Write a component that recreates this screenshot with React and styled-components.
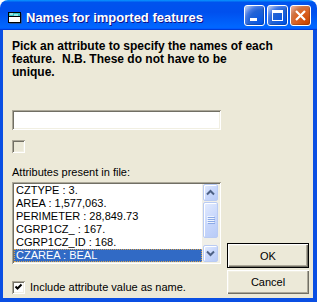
import React from "react";
import styled, { createGlobalStyle } from "styled-components";

const Global = createGlobalStyle`
  html, body { margin: 0; padding: 0; background: #ffffff; }
  * { box-sizing: border-box; }
`;

const Window = styled.div`
  width: 317px;
  height: 302px;
  display: flex;
  flex-direction: column;
  font-family: "Liberation Sans", Arial, sans-serif;
  color: #000;
`;

const TitleBar = styled.div`
  height: 30px;
  flex-shrink: 0;
  display: flex;
  align-items: center;
  padding: 5px 6px 0 7px;
  border-radius: 8px 8px 0 0;
  background: linear-gradient(180deg, #0997ff 0%, #0053ee 8%, #0050ee 40%, #0066ff 88%, #0066ff 93%, #005bff 95%, #003dd7 96%, #003dd7 100%);
`;

const TitleIcon = styled.svg`
  width: 16px;
  height: 16px;
  margin-right: 3px;
  margin-top: -2px;
  flex-shrink: 0;
`;

const TitleText = styled.span`
  font-family: "Liberation Sans", Arial, sans-serif;
  font-weight: bold;
  font-size: 13px;
  line-height: 16px;
  color: #fff;
  text-shadow: 1px 1px #0f1089;
  white-space: nowrap;
`;

const CaptionButtons = styled.div`
  margin-left: auto;
  align-self: flex-start;
  display: flex;
  gap: 2px;
`;

const CaptionButton = styled.div`
  width: 21px;
  height: 21px;
  border: 1px solid #fff;
  border-radius: 3px;
  display: flex;
  align-items: center;
  justify-content: center;
  background: ${(p) =>
    p.$close
      ? "radial-gradient(circle at 85% 90%, #cc4600 0%, #dc6527 55%, #cd7546 70%, #e9a48a 90%)"
      : "radial-gradient(circle at 90% 90%, #0054e9 0%, #2263d5 55%, #4479e4 70%, #a3bbec 90%)"};
  box-shadow: inset -1px -1px 1px rgba(0, 0, 0, 0.2);
`;

const Body = styled.div`
  flex: 1;
  display: flex;
  flex-direction: column;
  background: #ece9d8;
  border-style: solid;
  border-color: #0a4fe3;
  border-width: 0 4px 4px 3px;
  padding: 10px 4px 0 9px;
`;

const Instructions = styled.p`
  margin: 0;
  font-size: 12px;
  line-height: 13px;
  font-weight: bold;
  white-space: nowrap;
`;

const MainRow = styled.div`
  display: flex;
  align-items: flex-end;
  gap: 6px;
`;

const LeftColumn = styled.div`
  width: 209px;
  display: flex;
  flex-direction: column;
`;

const sunken = `
  box-shadow: inset 1px 1px #aca899, inset -1px -1px #ffffff, inset 2px 2px #716f64, inset -2px -2px #f1efe2;
`;

const TextBox = styled.div`
  margin-top: 31px;
  height: 20px;
  background: #fff;
  ${sunken}
`;

const CheckBox = styled.span`
  width: 13px;
  height: 13px;
  flex-shrink: 0;
  display: flex;
  align-items: center;
  justify-content: center;
  margin-top: ${(p) => p.$top || 0}px;
  background: ${(p) => (p.$disabled ? "#ece9d8" : "#ffffff")};
  ${sunken}
`;

const Label = styled.div`
  font-size: 11px;
  line-height: 13px;
  margin-top: ${(p) => p.$top || 0}px;
  white-space: nowrap;
`;

const ListBox = styled.div`
  margin-top: 3px;
  height: 82px;
  padding: 2px;
  display: flex;
  background: #fff;
  ${sunken}
`;

const Items = styled.div`
  flex: 1;
  overflow: hidden;
`;

const Item = styled.div`
  height: 13px;
  font-size: 11px;
  line-height: 13px;
  padding-left: 2px;
  white-space: nowrap;
  background: ${(p) => (p.$selected ? "#316ac5" : "transparent")};
  color: ${(p) => (p.$selected ? "#ffffff" : "#000000")};
  outline: ${(p) => (p.$selected ? "1px dotted #d9a34e" : "none")};
  outline-offset: -1px;
`;

const ScrollBar = styled.div`
  width: 17px;
  display: flex;
  flex-direction: column;
  background: #f0efe8;
  padding: 0 1px;
`;

const ScrollButton = styled.div`
  height: 17px;
  flex-shrink: 0;
  display: flex;
  align-items: center;
  justify-content: center;
  border: 1px solid #b9cbf3;
  border-radius: 2px;
  background: linear-gradient(135deg, #e4ecfe 0%, #c9d8fc 50%, #b8cbf7 100%);
  box-shadow: inset 1px 1px #ffffff;
`;

const Thumb = styled(ScrollButton)`
  height: 36px;
  margin-top: 1px;
`;

const Spacer = styled.div`
  flex: 1;
`;

const CheckRow = styled.div`
  margin-top: 16px;
  height: 14px;
  display: flex;
  align-items: center;
  gap: 5px;
`;

const ButtonColumn = styled.div`
  width: 82px;
  display: flex;
  flex-direction: column;
  gap: 2px;
`;

const PushButton = styled.div`
  height: ${(p) => (p.$default ? 25 : 24)}px;
  display: flex;
  align-items: center;
  justify-content: center;
  font-size: 11px;
  background: #ece9d8;
  border: ${(p) => (p.$default ? "1px solid #000" : "none")};
  box-shadow: inset 1px 1px #ffffff, inset -1px -1px #716f64, inset -2px -2px #aca899, inset 2px 2px #f1efe2;
`;

const Chevron = ({ up }) => (
  <svg width="9" height="7" viewBox="0 0 9 7">
    <path
      d={up ? "M1 5.5 L4.5 2 L8 5.5" : "M1 1.5 L4.5 5 L8 1.5"}
      fill="none"
      stroke="#4d6185"
      strokeWidth="2"
    />
  </svg>
);

const Grip = () => (
  <svg width="8" height="8" viewBox="0 0 8 8">
    {[0, 2, 4, 6].map((y) => (
      <g key={y}>
        <rect x="0" y={y} width="7" height="1" fill="#eef4fe" />
        <rect x="1" y={y + 1} width="7" height="1" fill="#8caae6" />
      </g>
    ))}
  </svg>
);

const items = [
  "CZTYPE : 3.",
  "AREA : 1,577,063.",
  "PERIMETER : 28,849.73",
  "CGRP1CZ_ : 167.",
  "CGRP1CZ_ID : 168.",
  "CZAREA : BEAL",
];

export default function App() {
  return (
    <>
      <Global />
      <Window>
        <TitleBar>
          <TitleIcon viewBox="0 0 16 16">
            <rect x="2.5" y="4.5" width="12" height="10" fill="#404040" />
            <rect x="1.5" y="3.5" width="12" height="10" fill="#ffffff" stroke="#000" />
            <rect x="2" y="4" width="11" height="3" fill="#39c6c6" />
            <path d="M3 5 L6 5 M7 6 L11 6" stroke="#ffffff" strokeWidth="1" />
            <path d="M2 7.5 L13 7.5" stroke="#000" strokeWidth="1" />
          </TitleIcon>
          <TitleText>Names for imported features</TitleText>
          <CaptionButtons>
            <CaptionButton>
              <svg width="19" height="19" viewBox="0 0 19 19">
                <rect x="5" y="12" width="7" height="3" fill="#fff" />
              </svg>
            </CaptionButton>
            <CaptionButton>
              <svg width="19" height="19" viewBox="0 0 19 19">
                <rect x="4.5" y="4.5" width="10" height="10" fill="none" stroke="#fff" />
                <rect x="4" y="4" width="11" height="3" fill="#fff" />
              </svg>
            </CaptionButton>
            <CaptionButton $close>
              <svg width="19" height="19" viewBox="0 0 19 19">
                <path d="M5 5 L14 14 M14 5 L5 14" stroke="#fff" strokeWidth="2.2" />
              </svg>
            </CaptionButton>
          </CaptionButtons>
        </TitleBar>
        <Body>
          <Instructions>
            Pick an attribute to specify the names of each
            <br />
            {"feature.\u00a0 N.B. These do not have to be"}
            <br />
            unique.
          </Instructions>
          <MainRow>
            <LeftColumn>
              <TextBox />
              <CheckBox $disabled $top={10} />
              <Label $top={13}>Attributes present in file:</Label>
              <ListBox>
                <Items>
                  {items.map((t, i) => (
                    <Item key={t} $selected={i === items.length - 1}>
                      {t}
                    </Item>
                  ))}
                </Items>
                <ScrollBar>
                  <ScrollButton>
                    <Chevron up />
                  </ScrollButton>
                  <Thumb>
                    <Grip />
                  </Thumb>
                  <Spacer />
                  <ScrollButton>
                    <Chevron />
                  </ScrollButton>
                </ScrollBar>
              </ListBox>
              <CheckRow>
                <CheckBox>
                  <svg width="9" height="9" viewBox="0 0 9 9">
                    <path d="M1.5 3.5 L3.5 5.5 L7.5 1.5" fill="none" stroke="#000" strokeWidth="2" />
                  </svg>
                </CheckBox>
                <Label>Include attribute value as name.</Label>
              </CheckRow>
            </LeftColumn>
            <ButtonColumn>
              <PushButton $default>OK</PushButton>
              <PushButton>Cancel</PushButton>
            </ButtonColumn>
          </MainRow>
        </Body>
      </Window>
    </>
  );
}
